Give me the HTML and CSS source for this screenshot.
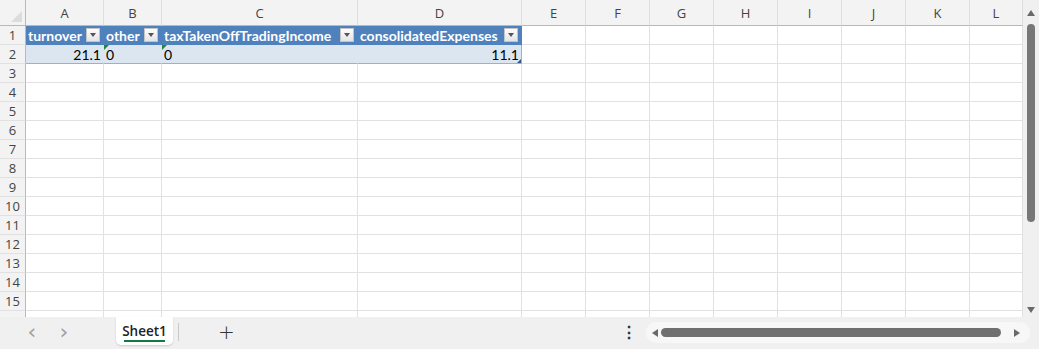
FILE: index.html
```html
<!DOCTYPE html>
<html lang="en">
<head>
    <meta charset="UTF-8">
    <title>Sheet1</title>
    <link rel="stylesheet" href="styles.css">
</head>
<body>
    <div class="app">
        <div class="main">
            <!-- Grid -->
            <div class="sheet">
                <div class="row head">
                    <div class="corner"><span class="corner-tri"></span></div>
                    <div>A</div><div>B</div><div>C</div><div>D</div><div>E</div><div>F</div>
                    <div>G</div><div>H</div><div>I</div><div>J</div><div>K</div><div>L</div>
                </div>
                <div class="row">
                    <div class="rh">1</div>
                    <div class="th">turnover<span class="filter"></span></div>
                    <div class="th">other<span class="filter"></span></div>
                    <div class="th">taxTakenOffTradingIncome<span class="filter"></span></div>
                    <div class="th">consolidatedExpenses<span class="filter"></span></div>
                    <div></div><div></div><div></div><div></div><div></div><div></div><div></div><div></div>
                </div>
                <div class="row">
                    <div class="rh">2</div>
                    <div class="td num">21.1</div>
                    <div class="td text"><span class="err"></span>0</div>
                    <div class="td text"><span class="err"></span>0</div>
                    <div class="td num last">11.1<span class="resize"></span></div>
                    <div></div><div></div><div></div><div></div><div></div><div></div><div></div><div></div>
                </div>
                <div class="row"><div class="rh">3</div><div></div><div></div><div></div><div></div><div></div><div></div><div></div><div></div><div></div><div></div><div></div><div></div></div>
                <div class="row"><div class="rh">4</div><div></div><div></div><div></div><div></div><div></div><div></div><div></div><div></div><div></div><div></div><div></div><div></div></div>
                <div class="row"><div class="rh">5</div><div></div><div></div><div></div><div></div><div></div><div></div><div></div><div></div><div></div><div></div><div></div><div></div></div>
                <div class="row"><div class="rh">6</div><div></div><div></div><div></div><div></div><div></div><div></div><div></div><div></div><div></div><div></div><div></div><div></div></div>
                <div class="row"><div class="rh">7</div><div></div><div></div><div></div><div></div><div></div><div></div><div></div><div></div><div></div><div></div><div></div><div></div></div>
                <div class="row"><div class="rh">8</div><div></div><div></div><div></div><div></div><div></div><div></div><div></div><div></div><div></div><div></div><div></div><div></div></div>
                <div class="row"><div class="rh">9</div><div></div><div></div><div></div><div></div><div></div><div></div><div></div><div></div><div></div><div></div><div></div><div></div></div>
                <div class="row"><div class="rh">10</div><div></div><div></div><div></div><div></div><div></div><div></div><div></div><div></div><div></div><div></div><div></div><div></div></div>
                <div class="row"><div class="rh">11</div><div></div><div></div><div></div><div></div><div></div><div></div><div></div><div></div><div></div><div></div><div></div><div></div></div>
                <div class="row"><div class="rh">12</div><div></div><div></div><div></div><div></div><div></div><div></div><div></div><div></div><div></div><div></div><div></div><div></div></div>
                <div class="row"><div class="rh">13</div><div></div><div></div><div></div><div></div><div></div><div></div><div></div><div></div><div></div><div></div><div></div><div></div></div>
                <div class="row"><div class="rh">14</div><div></div><div></div><div></div><div></div><div></div><div></div><div></div><div></div><div></div><div></div><div></div><div></div></div>
                <div class="row"><div class="rh">15</div><div></div><div></div><div></div><div></div><div></div><div></div><div></div><div></div><div></div><div></div><div></div><div></div></div>
                <div class="row"><div class="rh"></div><div></div><div></div><div></div><div></div><div></div><div></div><div></div><div></div><div></div><div></div><div></div><div></div></div>
            </div>

            <!-- Vertical scrollbar -->
            <div class="vscroll">
                <span class="arrow-up"></span>
                <div class="vthumb"></div>
                <span class="arrow-down"></span>
            </div>
        </div>

        <!-- Sheet tabs / bottom bar -->
        <div class="tabbar">
            <div class="nav">
                <span class="nav-btn">&#8249;</span>
                <span class="nav-btn">&#8250;</span>
            </div>
            <div class="tab">Sheet1</div>
            <span class="tab-sep"></span>
            <span class="add">+</span>
            <span class="more">&#8942;</span>
            <div class="hscroll">
                <span class="arrow-left"></span>
                <div class="hthumb"></div>
                <span class="arrow-right"></span>
            </div>
        </div>
    </div>
</body>
</html>
```

FILE: styles.css
```css
* {
    margin: 0;
    padding: 0;
    box-sizing: border-box;
}

body {
    width: 1039px;
    height: 349px;
    overflow: hidden;
    background-color: #fff;
    font-family: "Open Sans", "Noto Sans", sans-serif;
}

.app {
    display: flex;
    flex-direction: column;
    height: 349px;
}

.main {
    display: flex;
    height: 317px;
}

/* Grid */
.sheet {
    width: 1023px;
    height: 317px;
    overflow: hidden;
}

.row {
    display: grid;
    grid-template-columns: 26px 78px 58px 196px 164px repeat(7, 64px) 53px;
    height: 19px;
}

.row > div {
    position: relative;
    border-right: 1px solid #e1e1e1;
    border-bottom: 1px solid #e1e1e1;
    overflow: hidden;
    white-space: nowrap;
    font-family: Lato, "Liberation Sans", sans-serif;
    font-size: 14px;
    line-height: 19px;
}

.row.head {
    height: 26px;
}

.row.head > div {
    background-color: #f3f3f3;
    border-bottom-color: #b9b9b9;
    border-right-color: #dedede;
    display: flex;
    align-items: center;
    justify-content: center;
    font-family: "Open Sans", "Noto Sans", sans-serif;
    font-size: 13px;
    color: #444;
    padding-top: 1px;
}

.row.head > .corner {
    border-right-color: #b9b9b9;
}

.corner-tri {
    position: absolute;
    right: 3px;
    bottom: 3px;
    width: 0;
    height: 0;
    border-left: 11px solid transparent;
    border-bottom: 11px solid #dcdcdc;
}

.row > .rh {
    background-color: #f3f3f3;
    border-right-color: #b9b9b9;
    text-align: center;
    font-family: "Open Sans", "Noto Sans", sans-serif;
    font-size: 13px;
    line-height: 18px;
    color: #444;
}

/* Table header */
.row > .th {
    background-color: #4f81bd;
    border-right-color: #4f81bd;
    border-bottom-color: #4f81bd;
    color: #fff;
    font-weight: bold;
    padding-left: 2px;
}

.filter {
    position: absolute;
    right: 3px;
    top: 2px;
    width: 14px;
    height: 14px;
    background: linear-gradient(#fdfdfd, #e4e4e4);
    border: 1px solid #c4c4c4;
}

.filter::after {
    content: "";
    position: absolute;
    left: 3px;
    top: 4px;
    border-left: 3.5px solid transparent;
    border-right: 3.5px solid transparent;
    border-top: 4px solid #555;
}

/* Table body */
.row > .td {
    background-color: #dce6f1;
    border-right-color: #dce6f1;
    border-bottom-color: #95b3d7;
    color: #000;
    padding: 0 2px;
}

.row > .last {
    border-right-color: #95b3d7;
}

.num {
    text-align: right;
}

.err {
    position: absolute;
    left: 0;
    top: 0;
    border-top: 5px solid #1e8a3a;
    border-right: 5px solid transparent;
}

.resize {
    position: absolute;
    right: 0;
    bottom: 0;
    border-bottom: 4px solid #2f5597;
    border-left: 4px solid transparent;
}

/* Vertical scrollbar */
.vscroll {
    width: 16px;
    background-color: #f0f0f0;
    display: flex;
    flex-direction: column;
    align-items: center;
    padding-top: 10px;
    position: relative;
}

.arrow-up {
    border-left: 4px solid transparent;
    border-right: 4px solid transparent;
    border-bottom: 6px solid #6a6a6a;
}

.vthumb {
    width: 8px;
    height: 198px;
    margin-top: 8px;
    background-color: #777;
    border-radius: 4px;
}

.arrow-down {
    position: absolute;
    bottom: 4px;
    left: 4px;
    border-left: 4px solid transparent;
    border-right: 4px solid transparent;
    border-top: 6px solid #6a6a6a;
}

/* Bottom bar */
.tabbar {
    height: 32px;
    background-color: #f0f0f0;
    display: flex;
    align-items: flex-start;
}

.nav {
    display: flex;
    gap: 16px;
    padding-left: 24px;
    width: 116px;
    height: 30px;
    align-items: center;
}

.nav-btn {
    width: 16px;
    text-align: center;
    font-size: 22px;
    color: #a0a0a0;
    font-family: "DejaVu Sans", sans-serif;
    line-height: 22px;
}

.tab {
    width: 57px;
    height: 28px;
    background-color: #fff;
    border-radius: 0 0 5px 5px;
    box-shadow: 0 1px 2px rgba(0, 0, 0, 0.15);
    font-family: "Open Sans", "Noto Sans", sans-serif;
    font-weight: 600;
    font-size: 13.5px;
    color: #222;
    text-align: center;
    line-height: 28px;
    position: relative;
}

.tab::after {
    content: "";
    position: absolute;
    left: 8px;
    right: 8px;
    bottom: 3px;
    height: 2px;
    background-color: #107c41;
}

.tab-sep {
    width: 1px;
    height: 18px;
    margin: 6px 0 0 5px;
    background-color: #c8c8c8;
}

.add {
    margin: 0 0 0 39px;
    font-size: 20px;
    line-height: 30px;
    color: #333;
    font-family: "DejaVu Sans", sans-serif;
    font-weight: 300;
}

.more {
    margin-left: 386px;
    line-height: 30px;
    font-size: 16px;
    color: #333;
    font-weight: bold;
}

.hscroll {
    margin: 5px 0 0 9px;
    width: 384px;
    height: 21px;
    background-color: #f7f7f7;
    border-radius: 10px;
    display: flex;
    align-items: center;
    padding: 0 10px 0 6px;
    gap: 3px;
}

.arrow-left {
    border-top: 4px solid transparent;
    border-bottom: 4px solid transparent;
    border-right: 6px solid #6a6a6a;
}

.hthumb {
    flex: 1;
    height: 9px;
    background-color: #6f6f6f;
    border-radius: 5px;
    margin-right: 10px;
}

.arrow-right {
    border-top: 4px solid transparent;
    border-bottom: 4px solid transparent;
    border-left: 6px solid #6a6a6a;
}
```
